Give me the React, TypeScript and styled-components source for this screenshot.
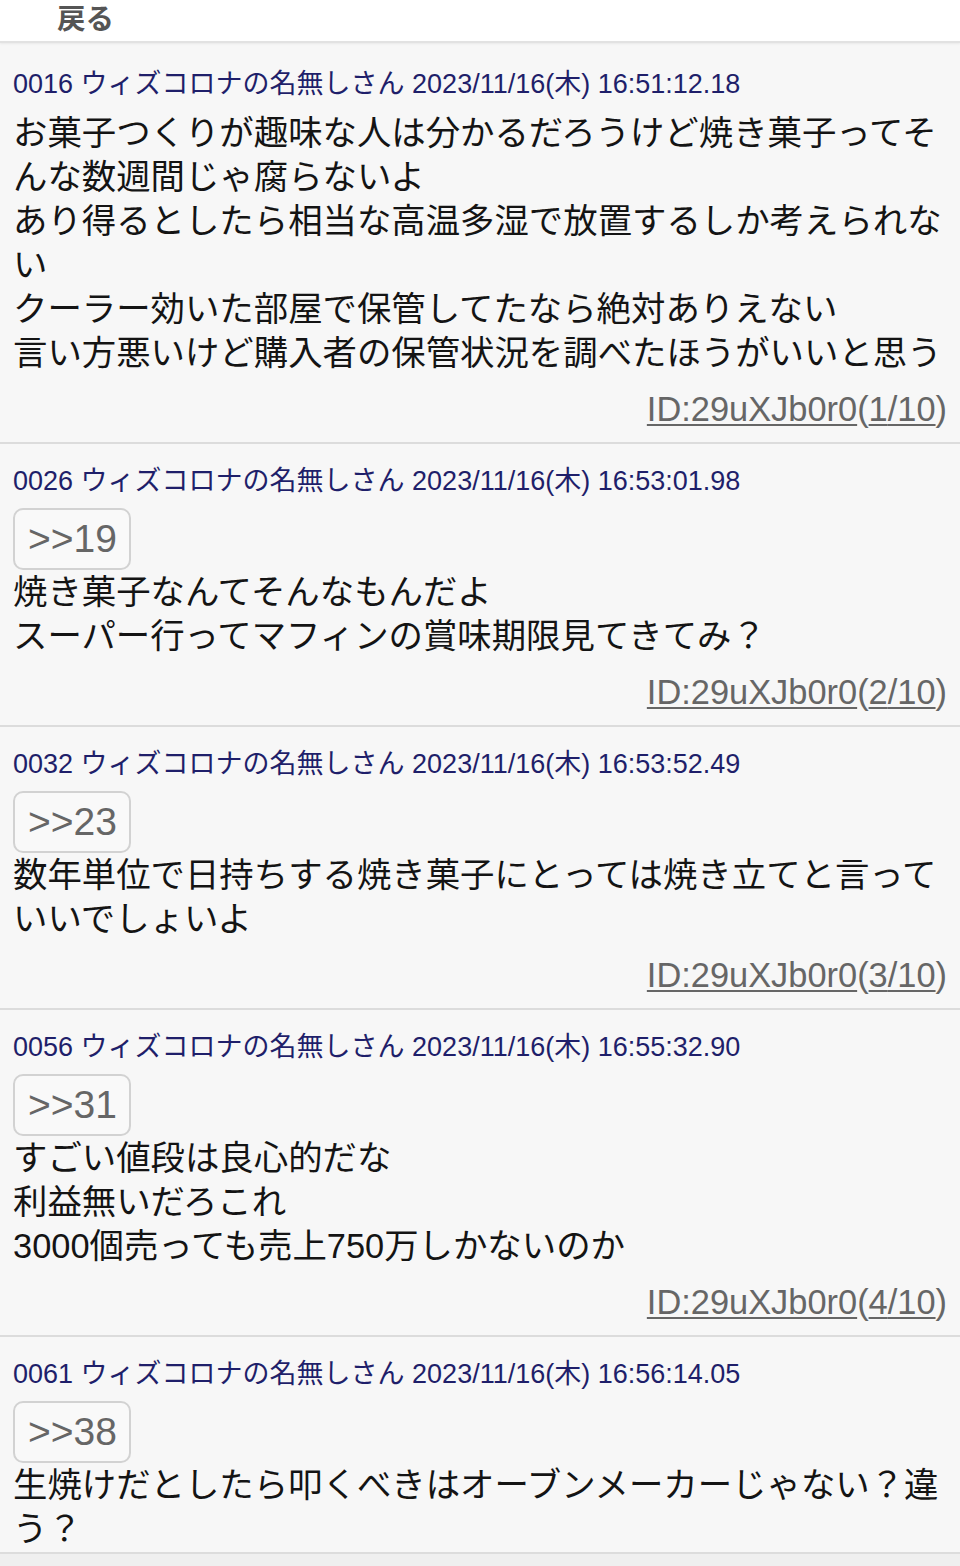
import React from "react";
import styled, { createGlobalStyle } from "styled-components";

const Global = createGlobalStyle`
  html, body {
    margin: 0;
    padding: 0;
    background: #f7f7f7;
    font-family: "Liberation Sans", Arial, "Noto Sans CJK JP", sans-serif;
  }
`;

const Page = styled.div`
  width: 960px;
  min-height: 1566px;
  background: #f7f7f7;
  overflow: hidden;
`;

const TopBar = styled.header`
  height: 41px;
  background: #ffffff;
  border-bottom: 2px solid #e2e2e2;
  box-shadow: 0 1px 2px rgba(0, 0, 0, 0.06);
  display: flex;
  align-items: flex-start;
  padding-left: 57px;
  margin-bottom: 4px;
`;

const BackLink = styled.span`
  font-family: "Noto Sans CJK JP", sans-serif;
  font-weight: 700;
  font-size: 28.5px;
  line-height: 36px;
  margin-top: -1px;
  color: #555555;
`;

const Post = styled.article<{ $last?: boolean }>`
  background: #f7f7f7;
  padding: 22px 13px ${(p) => (p.$last ? "1px" : "11px")};
  border-bottom: 2px solid #dcdcdc;
`;

const PostHead = styled.div`
  font-size: 27px;
  line-height: 30px;
  color: #1f1f6a;
  white-space: nowrap;
`;

const Body = styled.div`
  margin-top: 12px;
  font-size: 34.4px;
  line-height: 44px;
  color: #141414;
  line-break: strict;
`;

const Anchor = styled.span`
  display: block;
  width: fit-content;
  box-sizing: border-box;
  height: 62px;
  margin-top: 2px;
  padding: 0 12px 0 13px;
  border: 2px solid #d2d2d2;
  border-radius: 10px;
  background: #f9f9f9;
  font-size: 39px;
  line-height: 58px;
  color: #666666;
`;

const Line = styled.div``;

const IdRow = styled.div`
  margin-top: 12px;
  text-align: right;
  font-size: 34.4px;
  line-height: 44px;
  color: #666666;
`;

const IdLink = styled.span`
  text-decoration: underline;
  text-decoration-thickness: 2px;
  text-underline-offset: 3px;
`;

const Tail = styled.div`
  height: 14px;
  background: #efefef;
`;

type PostData = {
  no: string;
  time: string;
  anchor?: string;
  lines: string[];
  idx?: number;
};

const posts: PostData[] = [
  {
    no: "0016",
    time: "16:51:12.18",
    lines: [
      "お菓子つくりが趣味な人は分かるだろうけど焼き菓子ってそんな数週間じゃ腐らないよ",
      "あり得るとしたら相当な高温多湿で放置するしか考えられない",
      "クーラー効いた部屋で保管してたなら絶対ありえない",
      "言い方悪いけど購入者の保管状況を調べたほうがいいと思う",
    ],
    idx: 1,
  },
  {
    no: "0026",
    time: "16:53:01.98",
    anchor: ">>19",
    lines: ["焼き菓子なんてそんなもんだよ", "スーパー行ってマフィンの賞味期限見てきてみ？"],
    idx: 2,
  },
  {
    no: "0032",
    time: "16:53:52.49",
    anchor: ">>23",
    lines: ["数年単位で日持ちする焼き菓子にとっては焼き立てと言っていいでしょいよ"],
    idx: 3,
  },
  {
    no: "0056",
    time: "16:55:32.90",
    anchor: ">>31",
    lines: ["すごい値段は良心的だな", "利益無いだろこれ", "3000個売っても売上750万しかないのか"],
    idx: 4,
  },
  {
    no: "0061",
    time: "16:56:14.05",
    anchor: ">>38",
    lines: ["生焼けだとしたら叩くべきはオーブンメーカーじゃない？違う？"],
  },
];

export default function App() {
  return (
    <Page>
      <Global />
      <TopBar>
        <BackLink>戻る</BackLink>
      </TopBar>
      {posts.map((p, i) => (
        <Post key={p.no} $last={i === posts.length - 1}>
          <PostHead>
            {p.no} ウィズコロナの名無しさん 2023/11/16(木) {p.time}
          </PostHead>
          <Body>
            {p.anchor && <Anchor>{p.anchor}</Anchor>}
            {p.lines.map((l, j) => (
              <Line key={j}>{l}</Line>
            ))}
          </Body>
          {p.idx !== undefined && (
            <IdRow>
              <IdLink>ID:29uXJb0r0</IdLink>(<IdLink>{p.idx}/10</IdLink>)
            </IdRow>
          )}
        </Post>
      ))}
      <Tail />
    </Page>
  );
}
